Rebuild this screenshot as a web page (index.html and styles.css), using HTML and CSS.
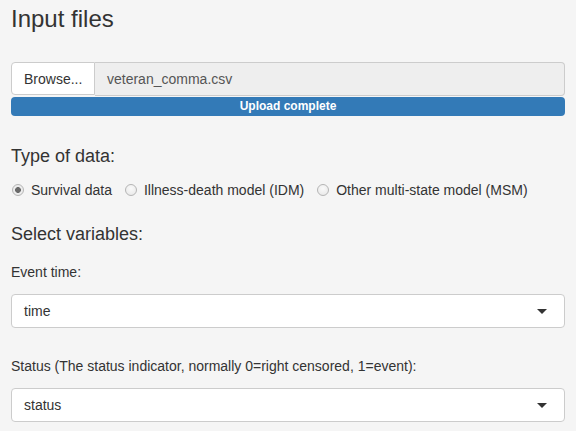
FILE: index.html
```html
<!DOCTYPE html>
<html>
<head>
<meta charset="utf-8">
<link rel="stylesheet" href="styles.css">
</head>
<body>
<div class="well">
  <h3 class="title">Input files</h3>
  <div class="file-group">
    <span class="browse">Browse...</span>
    <span class="file-name">veteran_comma.csv</span>
  </div>
  <div class="progress"><div class="progress-bar">Upload complete</div></div>

  <h4 class="section">Type of data:</h4>
  <div class="radios">
    <label class="radio"><span class="dot checked"></span>Survival data</label>
    <label class="radio"><span class="dot"></span>Illness-death model (IDM)</label>
    <label class="radio"><span class="dot"></span>Other multi-state model (MSM)</label>
  </div>

  <h4 class="section sel">Select variables:</h4>
  <div class="field first">
    <div class="label">Event time:</div>
    <div class="select"><span>time</span><span class="caret"></span></div>
  </div>
  <div class="field">
    <div class="label">Status (The status indicator, normally 0=right censored, 1=event):</div>
    <div class="select"><span>status</span><span class="caret"></span></div>
  </div>
</div>
</body>
</html>
```

FILE: styles.css
```css
html, body {
  margin: 0;
  padding: 0;
  background: #f5f5f5;
}
body {
  font-family: "Liberation Sans", Arial, sans-serif;
  font-size: 14px;
  line-height: 20px;
  color: #333;
}
.well {
  padding: 6px 11px 0 11px;
}
.title {
  margin: 0;
  font-size: 24px;
  font-weight: normal;
  line-height: 26px;
}
.file-group {
  margin-top: 30px;
  display: flex;
  height: 34px;
}
.browse {
  box-sizing: border-box;
  width: 84px;
  height: 33px;
  padding: 6px 12px;
  background: #fff;
  border: 1px solid #ccc;
  border-radius: 4px 0 0 4px;
  color: #333;
}
.file-name {
  flex: 1;
  box-sizing: border-box;
  height: 34px;
  padding: 6px 12px;
  background: #eee;
  border: 1px solid #ccc;
  border-left: none;
  border-radius: 0 4px 4px 0;
  color: #555;
}
.progress {
  margin-top: 1px;
  height: 19px;
  border-radius: 4px;
  background: #337ab7;
  overflow: hidden;
}
.progress-bar {
  height: 19px;
  line-height: 19px;
  text-align: center;
  color: #fff;
  font-size: 12px;
  font-weight: bold;
}
.section {
  margin: 30px 0 0 0;
  font-size: 18px;
  font-weight: normal;
  line-height: 20px;
}
.radios {
  display: flex;
  margin-top: 14px;
  height: 20px;
}
.radio {
  display: flex;
  align-items: center;
  margin-right: 12px;
  white-space: nowrap;
}
.dot {
  box-sizing: border-box;
  width: 12px;
  height: 12px;
  margin: 0 7px 0 1px;
  border-radius: 50%;
  border: 1px solid #b5b5b5;
  background: radial-gradient(circle at 50% 35%, #fafafa 0%, #e6e6e6 100%);
}
.dot.checked {
  background: radial-gradient(circle, #6a6a6a 0 2.6px, #ececec 3.2px);
}
.sel {
  margin-top: 24px;
}
.field.first {
  margin-top: 18px;
}
.field {
  margin-top: 28px;
}
.label {
  line-height: 20px;
}
.select {
  margin-top: 12px;
  box-sizing: border-box;
  height: 34px;
  display: flex;
  align-items: center;
  justify-content: space-between;
  padding: 0 17px 0 12px;
  background: #fff;
  border: 1px solid #ccc;
  border-radius: 4px;
}
.caret {
  width: 0;
  height: 0;
  border-left: 5px solid transparent;
  border-right: 5px solid transparent;
  border-top: 5px solid #333;
}
```
